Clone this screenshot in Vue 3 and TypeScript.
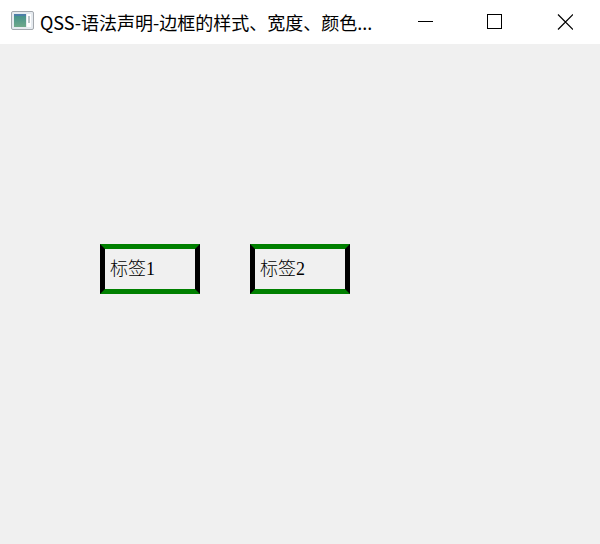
<script setup lang="ts">
const labels: string[] = ['标签1', '标签2']
</script>

<template>
  <div class="window">
    <header class="titlebar">
      <svg class="app-icon" width="23" height="19" viewBox="0 0 23 19">
        <defs>
          <linearGradient id="pane" x1="0" y1="0" x2="0" y2="1">
            <stop offset="0" stop-color="#3f8f8c" />
            <stop offset="1" stop-color="#6fa98a" />
          </linearGradient>
        </defs>
        <rect x="0.5" y="0.5" width="22" height="18" rx="1.5" fill="#e6ebf0" stroke="#a3a8ae" />
        <rect x="3" y="3" width="12" height="13" fill="url(#pane)" />
        <rect x="3" y="3" width="12" height="2" fill="#4c7fa8" />
        <rect x="16" y="3" width="4" height="13" fill="#ffffff" />
        <rect x="17" y="5" width="2" height="7" fill="#b9c4c8" />
      </svg>
      <span class="title">QSS-语法声明-边框的样式、宽度、颜色...</span>
      <div class="controls">
        <button class="control" aria-label="最小化">
          <svg width="16" height="16" viewBox="0 0 16 16"><path d="M1 7.5H16" stroke="#000" fill="none" /></svg>
        </button>
        <button class="control" aria-label="最大化">
          <svg width="16" height="16" viewBox="0 0 16 16"><rect x="0.5" y="0.5" width="14" height="14" stroke="#000" fill="none" /></svg>
        </button>
        <button class="control" aria-label="关闭">
          <svg width="16" height="16" viewBox="0 0 16 16"><path d="M1 0.5L16 15.5M16 0.5L1 15.5" stroke="#000" stroke-width="1.2" fill="none" /></svg>
        </button>
      </div>
    </header>
    <main class="content">
      <div v-for="label in labels" :key="label" class="label">{{ label }}</div>
    </main>
  </div>
</template>

<style>
html,
body {
  margin: 0;
  background: #f0f0f0;
}
</style>

<style scoped>
.window {
  width: 600px;
  height: 544px;
  display: flex;
  flex-direction: column;
  background: #f0f0f0;
  overflow: hidden;
}
.titlebar {
  height: 44px;
  flex: none;
  display: flex;
  align-items: center;
  background: #ffffff;
  padding-left: 11px;
  box-sizing: border-box;
}
.app-icon {
  flex: none;
  margin-top: -3px;
}
.title {
  margin-left: 6px;
  margin-top: -1px;
  font-family: "Noto Sans CJK SC", "Liberation Sans", sans-serif;
  font-size: 18px;
  color: #000000;
  white-space: nowrap;
}
.controls {
  margin-left: auto;
  display: flex;
  height: 100%;
}
.control {
  width: 70px;
  height: 44px;
  padding: 0;
  border: none;
  background: transparent;
  display: flex;
  align-items: center;
  justify-content: center;
}
.content {
  flex: 1;
  display: flex;
  align-items: flex-start;
  gap: 50px;
  padding: 200px 0 0 100px;
}
.label {
  width: 100px;
  height: 50px;
  box-sizing: border-box;
  border-style: solid;
  border-width: 5px;
  border-color: #008000 #000000;
  padding: 0 0 4px 5px;
  display: flex;
  align-items: center;
  font-family: "Liberation Serif", "Noto Sans CJK SC", serif;
  font-size: 18px;
  font-weight: 300;
  color: #000000;
}
</style>
